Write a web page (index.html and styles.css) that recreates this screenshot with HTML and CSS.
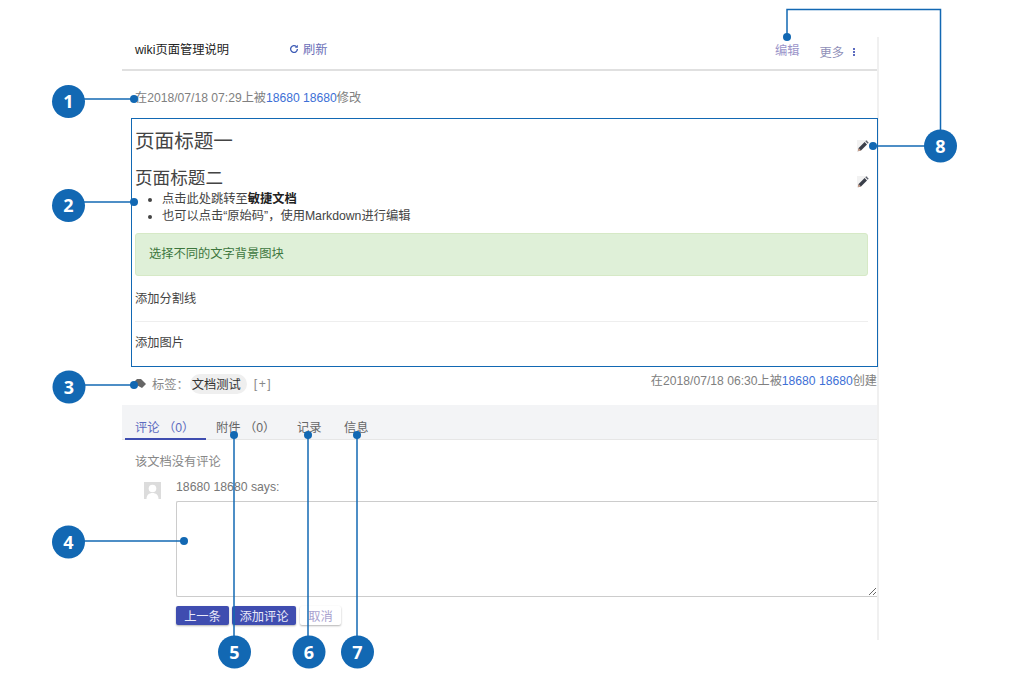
FILE: index.html
```html
<!DOCTYPE html>
<html lang="zh">
<head>
  <meta charset="UTF-8" />
  <title>wiki页面管理说明</title>
  <link rel="stylesheet" href="styles.css">
</head>
<body>

  <div class="page">
    <div class="topbar">
      <span class="doc-title">wiki页面管理说明</span>
      <a class="refresh">
        <svg class="refresh-icon" width="10" height="10" viewBox="0 0 10 10"><path d="M8.4 5a3.4 3.4 0 1 1-1-2.4" fill="none" stroke="#3d5bb5" stroke-width="1.3"/><path d="M8.8 0.8v3h-3z" fill="#3d5bb5"/></svg>
        刷新
      </a>
      <a class="top-edit">编辑</a>
      <a class="top-more">更多<span class="dots"><i></i><i></i><i></i></span></a>
    </div>

    <p class="meta meta-top">在2018/07/18 07:29上被<a>18680 18680</a>修改</p>

    <!-- 正文 -->
    <div class="content">
      <div class="head-row head-one">
        <h1>页面标题一</h1>
        <svg class="pencil" width="12" height="12" viewBox="0 0 12 12"><path d="M0.8 11.2l0.8-3.2 6-6 2.4 2.4-6 6z" fill="#3a3f4a"/><path d="M8.3 1.3l1-1 2.4 2.4-1 1z" fill="#5a5f6a"/><path d="M0.8 11.2l0.8-3.2 2.4 2.4z" fill="#c9a08c"/></svg>
      </div>
      <div class="head-row head-two">
        <h2>页面标题二</h2>
        <svg class="pencil" width="12" height="12" viewBox="0 0 12 12"><path d="M0.8 11.2l0.8-3.2 6-6 2.4 2.4-6 6z" fill="#3a3f4a"/><path d="M8.3 1.3l1-1 2.4 2.4-1 1z" fill="#5a5f6a"/><path d="M0.8 11.2l0.8-3.2 2.4 2.4z" fill="#c9a08c"/></svg>
      </div>
      <ul>
        <li>点击此处跳转至<b>敏捷文档</b></li>
        <li>也可以点击“原始码”，使用Markdown进行编辑</li>
      </ul>
      <div class="alert">选择不同的文字背景图块</div>
      <p class="line-one">添加分割线</p>
      <hr>
      <p class="line-two">添加图片</p>
    </div>

    <div class="tag-row">
      <svg class="tag-icon" width="14" height="10" viewBox="0 0 14 10"><path d="M0 4l4-4h4l5 5-4 4z" fill="#666"/></svg>
      <span class="tag-label">标签：</span>
      <span class="tag">文档测试</span>
      <span class="tag-add">[+]</span>
      <span class="meta meta-created">在2018/07/18 06:30上被<a>18680 18680</a>创建</span>
    </div>

    <div class="tabs">
      <a class="tab tab-active">评论 （0）</a>
      <a class="tab tab-files">附件 （0）</a>
      <a class="tab tab-log">记录</a>
      <a class="tab tab-info">信息</a>
    </div>

    <div class="comments">
      <p class="no-comment">该文档没有评论</p>
      <div class="comment-form">
        <svg class="avatar" width="17" height="17" viewBox="0 0 17 17"><rect width="17" height="17" fill="#dcdcdc"/><circle cx="8.5" cy="6.5" r="3.8" fill="#fff"/><path d="M2.5 17c0-4 2.5-6 6-6s6 2 6 6z" fill="#fff"/></svg>
        <div class="form-main">
          <p class="says">18680 18680 says:</p>
          <textarea class="comment-box"></textarea>
          <div class="buttons">
            <button class="btn btn-primary btn-prev">上一条</button>
            <button class="btn btn-primary btn-add">添加评论</button>
            <button class="btn btn-cancel">取消</button>
          </div>
        </div>
      </div>
    </div>
  </div>

  <!-- 标注 -->
  <svg class="callouts" width="1015" height="679" viewBox="0 0 1015 679">
    <g fill="none" stroke="#1268b3" stroke-width="1.5">
      <path d="M68 99H134"/>
      <path d="M68 202H134"/>
      <path d="M69 385H134"/>
      <path d="M68 541H184"/>
      <path d="M234 435V652"/>
      <path d="M308 435V652"/>
      <path d="M357 435V652"/>
      <path d="M873 146H940"/>
      <path d="M787 37V9.5H940.5V146"/>
    </g>
    <g fill="#1268b3">
      <circle cx="134" cy="99" r="4"/>
      <circle cx="134" cy="202" r="4"/>
      <circle cx="134" cy="385" r="4"/>
      <circle cx="184" cy="541" r="4"/>
      <circle cx="234" cy="435" r="4"/>
      <circle cx="308" cy="435" r="4"/>
      <circle cx="357" cy="435" r="4"/>
      <circle cx="873" cy="146" r="4"/>
      <circle cx="787" cy="37" r="4"/>
      <circle cx="68.5" cy="101.5" r="16.5"/>
      <circle cx="68.5" cy="205.5" r="16.5"/>
      <circle cx="69" cy="387" r="16.5"/>
      <circle cx="68.5" cy="542" r="16.5"/>
      <circle cx="234.5" cy="652" r="16.5"/>
      <circle cx="309" cy="652" r="16.5"/>
      <circle cx="357.5" cy="652" r="16.5"/>
      <circle cx="940.5" cy="146" r="16.5"/>
    </g>
    <g class="callout-num">
      <text x="68.5" y="108">1</text>
      <text x="68.5" y="212">2</text>
      <text x="69" y="393.5">3</text>
      <text x="68.5" y="548.5">4</text>
      <text x="234.5" y="658.5">5</text>
      <text x="309" y="658.5">6</text>
      <text x="357.5" y="658.5">7</text>
      <text x="940.5" y="152.5">8</text>
    </g>
  </svg>

</body>
</html>
```

FILE: styles.css
```css
body {
  margin: 0;
  background: #fff;
  color: #444;
  font-family: "Liberation Sans", "Noto Sans CJK SC", sans-serif;
  font-size: 12.25px;
  height: 679px;
  overflow: hidden;
}

p {
  margin: 0;
}

a {
  color: #3d6fd6;
}

/* 页面主体 */
.page {
  width: 755px;
  height: 603px;
  margin: 37px 0 0 122px;
  border-right: 2px solid #f0f0f0;
}

.topbar {
  display: flex;
  align-items: center;
  height: 24px;
  padding: 0 0 8px 13px;
  border-bottom: 2px solid #e0e0e0;
}

.doc-title {
  width: 154px;
  color: #222;
}

.refresh {
  display: flex;
  align-items: center;
  gap: 4px;
  color: #6a6fb8;
}

.top-edit {
  margin-left: auto;
  margin-top: 1px;
  color: #9a94c9;
}

.top-more {
  display: flex;
  align-items: center;
  margin: 5px 22px 0 20px;
  color: #8f8fb8;
}

.dots {
  display: flex;
  flex-direction: column;
  gap: 1px;
  margin-left: 9px;
}

.dots i {
  width: 2px;
  height: 2px;
  background: #5c6bc0;
}

.meta {
  color: #808080;
  font-size: 12.15px;
}

.meta a {
  color: #3d6fd6;
}

.meta-top {
  padding: 19px 0 0 13px;
  line-height: 16px;
}

.content {
  box-sizing: border-box;
  width: 747px;
  height: 249px;
  margin: 12px 0 0 9px;
  padding: 0 9px 0 3px;
  border: 1px solid #1268b3;
}

.head-row {
  display: flex;
  justify-content: space-between;
  align-items: flex-start;
}

.head-row h1,
.head-row h2 {
  margin: 0;
  font-weight: normal;
  color: #444;
}

.head-row h1 {
  font-size: 19.6px;
  line-height: 26px;
}

.head-row h2 {
  margin-top: -2px;
  font-size: 17.6px;
  line-height: 24px;
}

.head-one {
  height: 40px;
  padding-top: 9px;
}

.head-one .pencil {
  margin-top: 12px;
}

.head-two {
  height: 23px;
}

.head-two .pencil {
  margin-top: 8px;
}

.pencil {
  margin-right: -1px;
  background: linear-gradient(135deg, #f2f2f2 50%, transparent 50%);
}

ul {
  margin: 0;
  padding-left: 27px;
  line-height: 17px;
}

li b {
  color: #222;
}

.alert {
  margin-top: 8px;
  height: 43px;
  line-height: 41px;
  box-sizing: border-box;
  padding-left: 13px;
  background: #dff0d8;
  border: 1px solid #d6e9c6;
  border-radius: 3px;
  color: #3c763d;
}

.line-one {
  margin-top: 15px;
  line-height: 16px;
}

hr {
  margin: 14px 0 13px;
  border: 0;
  border-top: 1px solid #eee;
}

.line-two {
  line-height: 16px;
}

.tag-row {
  display: flex;
  align-items: center;
  height: 34px;
  margin-bottom: 4px;
  padding-left: 11px;
  color: #888;
}

.tag-icon {
  margin-right: 5px;
}

.tag-label {
  margin-right: 1px;
}

.tag {
  padding: 1px 6px 1px 2px;
  background: #efefef;
  border-radius: 10px;
  color: #333;
}

.tag-add {
  margin-left: 7px;
  letter-spacing: 1.5px;
}

.meta-created {
  margin-left: auto;
  margin-top: -9px;
}

/* 标签页 */
.tabs {
  display: flex;
  height: 34px;
  background: #f3f4f6;
  border-bottom: 1px solid #e6e6e6;
}

.tab {
  box-sizing: border-box;
  height: 35px;
  padding-top: 13px;
  color: #666;
  white-space: nowrap;
}

.tab-active {
  width: 81px;
  margin-left: 3px;
  padding-left: 10px;
  color: #5c6bc0;
  border-bottom: 2px solid #3f4db0;
}

.tab-files {
  margin-left: 10px;
  width: 81px;
}

.tab-log {
  width: 47px;
}

.tab-info {
  width: 40px;
}

.comments {
  padding-top: 14px;
}

.no-comment {
  padding-left: 13px;
  line-height: 16px;
  color: #888;
}

.comment-form {
  display: flex;
  margin-top: 11px;
}

.avatar {
  margin: 1px 15px 0 22px;
}

.form-main {
  flex: 1;
  min-width: 0;
}

.says {
  line-height: 12px;
  color: #777;
}

.comment-box {
  display: block;
  box-sizing: border-box;
  width: 100%;
  height: 96px;
  margin-top: 8px;
  border: 1px solid #ccc;
  border-right: 0;
  border-radius: 2px 0 0 2px;
  background: #fff;
}

.buttons {
  display: flex;
  margin-top: 9px;
  gap: 3px;
}

.btn {
  height: 19px;
  padding: 0;
  border: 0;
  border-radius: 2px;
  font: inherit;
  box-shadow: 0 1px 2px rgba(0, 0, 0, 0.3);
}

.btn-primary {
  background: #3f4db0;
  color: #e8e8f8;
}

.btn-prev {
  width: 53px;
}

.btn-add {
  width: 64px;
}

.btn-cancel {
  width: 41px;
  margin-left: 1px;
  background: #fff;
  color: #a9a3cf;
}

/* 标注层 */
.callouts {
  position: absolute;
  top: 0;
  left: 0;
}

.callout-num text {
  fill: #fff;
  font-family: "Noto Sans", sans-serif;
  font-size: 18px;
  font-weight: 700;
  text-anchor: middle;
}
```
